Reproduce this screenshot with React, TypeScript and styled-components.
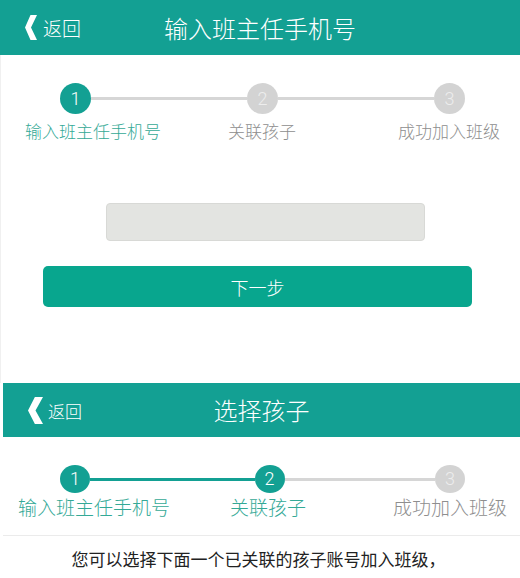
import React from 'react';
import styled, { createGlobalStyle } from 'styled-components';

const GlobalStyle = createGlobalStyle`
  html, body {
    margin: 0;
    padding: 0;
    background: #ffffff;
  }
  body {
    width: 520px;
    height: 578px;
    overflow: hidden;
    font-family: "Noto Sans CJK SC", "Noto Sans", sans-serif;
    font-weight: 300;
  }
`;

const TEAL = '#13a093';
const TEAL_BUTTON = '#08a68e';
const TEAL_TEXT = '#34a996';
const GREY_DOT = '#d3d3d3';

const Page = styled.div`
  display: flex;
  flex-direction: column;
  width: 520px;
`;

const Panel = styled.section<{ $inset?: number; $height?: number }>`
  display: flex;
  flex-direction: column;
  margin-left: ${(p) => p.$inset ?? 0}px;
  height: ${(p) => (p.$height ? `${p.$height}px` : 'auto')};
  flex-shrink: 0;
`;

const Body = styled.div<{ $edge?: boolean }>`
  flex: 1;
  display: flex;
  flex-direction: column;
  border-left: ${(p) => (p.$edge ? '1px solid #f0f0f0' : 'none')};
`;

/* ---------- navigation bar ---------- */

const Bar = styled.header<{ $h: number }>`
  height: ${(p) => p.$h}px;
  flex-shrink: 0;
  background: ${TEAL};
  color: #ffffff;
  display: grid;
  grid-template-columns: 1fr auto 1fr;
  align-items: center;
`;

const Back = styled.div<{ $size: number; $gap: number }>`
  display: flex;
  align-items: center;
  gap: ${(p) => p.$gap}px;
  padding-left: 25px;
  font-size: ${(p) => p.$size}px;
  font-weight: 300;
  line-height: 1;
`;

const Title = styled.h1<{ $size: number }>`
  margin: 0;
  font-size: ${(p) => p.$size}px;
  font-weight: 300;
  line-height: 1;
  white-space: nowrap;
`;

const Chevron = ({ w, h }: { w: number; h: number }) => (
  <svg width={w} height={h} viewBox="0 0 12 25" preserveAspectRatio="none">
    <polygon points="5.5,0 12,0 6,12.5 12,25 5.5,25 0,12.5" fill="#ffffff" />
  </svg>
);

type NavProps = {
  title: string;
  h: number;
  titleSize: number;
  backSize: number;
  backGap: number;
  chevron: [number, number];
};

const NavBar = ({ title, h, titleSize, backSize, backGap, chevron }: NavProps) => (
  <Bar $h={h}>
    <Back $size={backSize} $gap={backGap}>
      <Chevron w={chevron[0]} h={chevron[1]} />
      <span>返回</span>
    </Back>
    <Title $size={titleSize}>{title}</Title>
    <span />
  </Bar>
);

/* ---------- progress steps ---------- */

const StepsWrap = styled.div<{ $top: number }>`
  display: flex;
  flex-direction: column;
  padding-top: ${(p) => p.$top}px;
`;

const DotRow = styled.div<{ $left: number; $right: number }>`
  display: flex;
  align-items: center;
  padding: 0 ${(p) => p.$right}px 0 ${(p) => p.$left}px;
`;

const Dot = styled.div<{ $on: boolean; $d: number; $dh: number }>`
  width: ${(p) => p.$d}px;
  height: ${(p) => p.$dh}px;
  flex-shrink: 0;
  border-radius: 50%;
  background: ${(p) => (p.$on ? TEAL : GREY_DOT)};
  color: ${(p) => (p.$on ? '#ffffff' : '#ededed')};
  display: flex;
  align-items: center;
  justify-content: center;
  font-family: Roboto, "Noto Sans", sans-serif;
  font-size: 18px;
  font-weight: 300;
  line-height: 1;
`;

const Link = styled.div<{ $on: boolean; $grow: number }>`
  flex: ${(p) => p.$grow} 1 0;
  height: 3px;
  background: ${(p) => (p.$on ? TEAL : '#d6d6d6')};
`;

const LabelRow = styled.div<{ $cols: string; $left: number; $right: number; $gap: number; $size: number }>`
  display: grid;
  grid-template-columns: ${(p) => p.$cols};
  padding: 0 ${(p) => p.$right}px 0 ${(p) => p.$left}px;
  margin-top: ${(p) => p.$gap}px;
  font-size: ${(p) => p.$size}px;
  line-height: ${(p) => p.$size + 3}px;
`;

const Label = styled.span<{ $on: boolean; $align: 'start' | 'end' }>`
  justify-self: ${(p) => p.$align};
  white-space: nowrap;
  color: ${(p) => (p.$on ? TEAL_TEXT : '#8e8e8e')};
`;

const STEP_NAMES = ['输入班主任手机号', '关联孩子', '成功加入班级'];

type StepsProps = {
  active: number;
  top: number;
  d: number;
  dh: number;
  dotPad: [number, number];
  grow: [number, number];
  cols: string;
  labelPad: [number, number];
  labelGap: number;
  labelSize: number;
};

const Steps = ({ active, top, d, dh, dotPad, grow, cols, labelPad, labelGap, labelSize }: StepsProps) => (
  <StepsWrap $top={top}>
    <DotRow $left={dotPad[0]} $right={dotPad[1]}>
      <Dot $on={active >= 1} $d={d} $dh={dh}>1</Dot>
      <Link $on={active >= 2} $grow={grow[0]} />
      <Dot $on={active >= 2} $d={d} $dh={dh}>2</Dot>
      <Link $on={active >= 3} $grow={grow[1]} />
      <Dot $on={active >= 3} $d={d} $dh={dh}>3</Dot>
    </DotRow>
    <LabelRow $cols={cols} $left={labelPad[0]} $right={labelPad[1]} $gap={labelGap} $size={labelSize}>
      {STEP_NAMES.map((name, i) => (
        <Label key={name} $on={active >= i + 1} $align={i === 2 ? 'end' : 'start'}>
          {name}
        </Label>
      ))}
    </LabelRow>
  </StepsWrap>
);

/* ---------- phone form ---------- */

const Form = styled.div`
  display: flex;
  flex-direction: column;
  align-items: flex-start;
  padding-left: 42px;
  margin-top: 62px;
`;

const PhoneInput = styled.input`
  box-sizing: border-box;
  width: 319px;
  height: 38px;
  margin: 0 0 0 63px;
  border: 1px solid #d8d9d6;
  border-radius: 4px;
  background: #e3e4e1;
  outline: none;
`;

const NextButton = styled.button`
  width: 429px;
  height: 41px;
  margin-top: 25px;
  border: none;
  border-radius: 5px;
  background: ${TEAL_BUTTON};
  color: #ffffff;
  font-family: "Noto Sans CJK SC", "Noto Sans", sans-serif;
  font-size: 18px;
  font-weight: 300;
  line-height: 1;
  padding: 0;
`;

/* ---------- child selection ---------- */

const Divider = styled.div`
  height: 1px;
  margin-top: 17px;
  background: #ebebeb;
`;

const Hint = styled.p`
  margin: 0;
  padding-top: 13px;
  padding-right: 6px;
  text-align: center;
  font-size: 17px;
  font-weight: 400;
  line-height: 20px;
  color: #222222;
`;

export default function App() {
  return (
    <Page>
      <GlobalStyle />
      <Panel $height={383}>
        <NavBar
          title="输入班主任手机号"
          h={55}
          titleSize={24}
          backSize={19}
          backGap={6}
          chevron={[12, 25]}
        />
        <Body $edge>
          <Steps
            active={1}
            top={28}
            d={31}
            dh={31}
            dotPad={[59, 55]}
            grow={[1, 1]}
            cols="203px auto 1fr"
            labelPad={[24, 20]}
            labelGap={7}
            labelSize={17}
          />
          <Form>
            <PhoneInput type="tel" aria-label="班主任手机号" />
            <NextButton type="button">下一步</NextButton>
          </Form>
        </Body>
      </Panel>
      <Panel $inset={3}>
        <NavBar title="选择孩子" h={54} titleSize={24} backSize={17} backGap={5} chevron={[15, 27]} />
        <Body>
          <Steps
            active={2}
            top={28}
            d={30}
            dh={28}
            dotPad={[57, 55]}
            grow={[162, 148]}
            cols="212px auto 1fr"
            labelPad={[15, 13]}
            labelGap={3}
            labelSize={19}
          />
          <Divider />
          <Hint>您可以选择下面一个已关联的孩子账号加入班级，</Hint>
        </Body>
      </Panel>
    </Page>
  );
}
